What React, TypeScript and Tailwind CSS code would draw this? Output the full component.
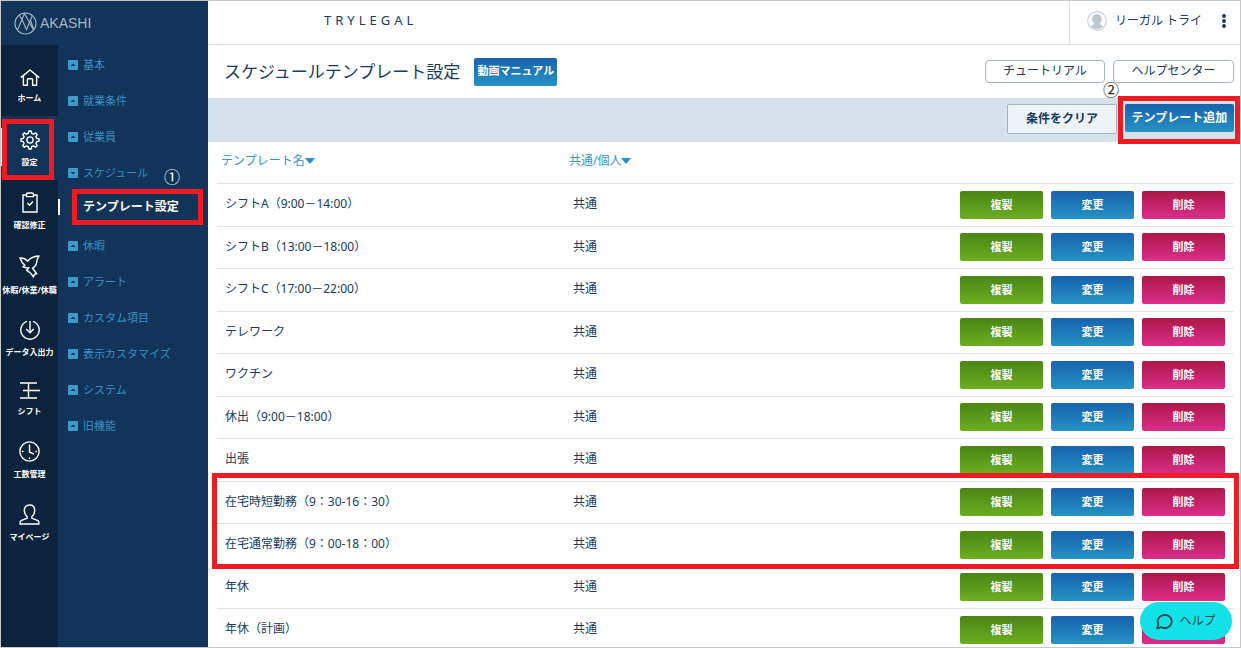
import React from "react";
import clsx from "clsx";

const iconProps = {
    fill: "none",
    stroke: "currentColor",
    strokeWidth: 1.4,
    "aria-hidden": true,
};

const HomeIcon = () => (
    <svg width="20" height="17" viewBox="0 0 20 17" {...iconProps}>
        <path d="M.8 8.6 10 1l9.2 7.6M3.4 7v9.3h4v-5.700q0-.8.8-.8h3.600q.8 0 .8.8v5.700h4V7" strokeLinejoin="round" />
    </svg>
);

const GearIcon = () => (
    <svg width="20" height="20" viewBox="0 0 20 20" {...iconProps} strokeLinejoin="round">
        <circle cx="10" cy="10" r="3.100" />
        <path d="M8.300 3.400 8.900 1h2.200l.6 2.400 1.800.8 2.200-1.300 1.500 1.500-1.300 2.200.8 1.800 2.400.6v2.100l-2.400.6-.8 1.800 1.300 2.200-1.500 1.500-2.200-1.300-1.800.8-.6 2.300H8.900l-.6-2.300-1.800-.8-2.200 1.300-1.500-1.500 1.300-2.200-.8-1.800L.9 11.100V9l2.400-.6.8-1.800-1.300-2.200 1.500-1.500 2.200 1.300z" />
    </svg>
);

const ClipboardIcon = () => (
    <svg width="16" height="21" viewBox="0 0 16 21" {...iconProps}>
        <path d="M4.500 3H1v17h14V3h-3.500M4.500 4.600V2.400Q4.500 1 6 1h4q1.500 0 1.500 1.400v2.200zM5.300 11l2.200 2.200 3.400-3.600" />
    </svg>
);

const BirdIcon = () => (
    <svg width="21" height="23" viewBox="0 0 21 23" {...iconProps} strokeLinejoin="round">
        <path d="M1 3c2.400-.2 5.400.6 7.800 3.200C11 2.600 14 1.500 20 1c-1.600 1.800-2 3.400-2.200 5.600-.3 3-1.800 5.200-4.300 6.600l4.300 5.600-2.200.5-1.300 2.700c-1.400-3-3.600-5.200-6.700-6.700l2.300-2.700c-1.800.5-4.200.3-6-.9L6 10.300C3.600 8.600 2 6.200 1 3z" />
    </svg>
);

const DownloadIcon = () => (
    <svg width="20" height="20" viewBox="0 0 20 20" {...iconProps}>
        <path d="M7 1.300a9.200 9.200 0 1 0 6 0M10 1v11.500M6.200 9 10 12.700 13.800 9" />
    </svg>
);

const ShiftIcon = () => (
    <svg width="20" height="17" viewBox="0 0 20 17" {...iconProps}>
        <path d="M0 1h17M3 8.500h17M0 16h17M8.500 1v15" />
    </svg>
);

const ClockIcon = () => (
    <svg width="21" height="21" viewBox="0 0 21 21" {...iconProps}>
        <circle cx="10.500" cy="10.500" r="9.600" />
        <path d="M10.500 3.500v7.500l4.500 2.200M3 10.500h1.500M16.500 10.500H18M10.500 16.500V18" />
    </svg>
);

const PersonIcon = () => (
    <svg width="21" height="21" viewBox="0 0 21 21" {...iconProps} strokeLinejoin="round">
        <path d="M10.500 1C7.400 1 5.300 3.100 5.300 6.200c0 2.400 1 4.800 2.800 6.300v1.800c-2.300.9-4.900 1.500-6.300 2.500-.6.500-.8 1.600-.8 3.200h19c0-1.600-.2-2.700-.8-3.200-1.400-1-4-1.600-6.300-2.500v-1.800c1.800-1.500 2.800-3.900 2.800-6.300C15.700 3.100 13.600 1 10.500 1z" />
    </svg>
);

const LogoMark = () => (
    <svg width="23" height="23" viewBox="0 0 23 23" fill="none" stroke="currentColor" strokeWidth="1.100" aria-hidden>
        <circle cx="11.500" cy="11.500" r="10.500" />
        <path d="M3.500 18 10.500 1.500 19.500 18M8 7.500l4.500 10L16.500 8l3 9M8 7.500 5.500 3.500M16.500 8l1.500-3.500" />
    </svg>
);

const navItems = [
    { label: "ホーム", Icon: HomeIcon },
    { label: "設定", Icon: GearIcon, active: true },
    { label: "確認修正", Icon: ClipboardIcon },
    { label: "休暇/休業/休職", Icon: BirdIcon },
    { label: "データ入出力", Icon: DownloadIcon },
    { label: "シフト", Icon: ShiftIcon },
    { label: "工数管理", Icon: ClockIcon },
    { label: "マイページ", Icon: PersonIcon },
];

const menuItems = [
    { label: "基本" },
    { label: "就業条件" },
    { label: "従業員" },
    { label: "スケジュール", child: "テンプレート設定" },
    { label: "休暇" },
    { label: "アラート" },
    { label: "カスタム項目" },
    { label: "表示カスタマイズ" },
    { label: "システム" },
    { label: "旧機能" },
];

const templates = [
    "シフトA（9:00－14:00）",
    "シフトB（13:00－18:00）",
    "シフトC（17:00－22:00）",
    "テレワーク",
    "ワクチン",
    "休出（9:00－18:00）",
    "出張",
    "在宅時短勤務（9：30-16：30）",
    "在宅通常勤務（9：00-18：00）",
    "年休",
    "年休（計画）",
];

const BLUE = "bg-linear-to-b from-[#1862ad] to-[#2793c4]";

const IconNav = () => (
    <nav className="w-[57px] shrink-0 bg-[#0c233d] pt-3">
        {navItems.map(({ label, Icon, active }) => (
            <a
                key={label}
                href="#"
                className={clsx(
                    "relative flex flex-col items-center gap-1 pb-[10px] text-white",
                    active ? "bg-[#123458] pt-[14px]" : "pt-3"
                )}
            >
                {active && <span className="absolute left-0 top-3 h-[38px] w-px bg-white" />}
                <Icon />
                <span className="text-[8px] leading-4 font-bold whitespace-nowrap">{label}</span>
                {active && <span className="absolute top-[3px] bottom-0 left-px w-[52px] border-5 border-[#ed1c24]" />}
            </a>
        ))}
    </nav>
);

const SideMenu = () => (
    <ul className="grow pt-[2px]">
        {menuItems.map(({ label, child }) => (
            <li key={label}>
                <a href="#" className="flex h-9 items-center gap-[5px] pl-[10px] text-[11px] text-[#3d8fc6]">
                    <svg width="10" height="10" viewBox="0 0 10 10" aria-hidden>
                        <rect width="10" height="10" rx="1" fill="#3d9bcb" />
                        <path d={child ? "M2.500 4h5L5 6.500z" : "M2.500 6h5L5 3.500z"} fill="#123458" />
                    </svg>
                    {label}
                </a>
                {child && (
                    <div className="relative">
                        <a href="#" className="flex h-[37px] items-start pt-2 pl-[25px] text-xs leading-4 font-bold text-white">
                            <span className="absolute left-0 top-2 h-4 w-[2px] bg-white" />
                            {child}
                        </a>
                        <span className="absolute left-[14px] -top-[2px] h-9 w-[131px] border-5 border-[#ed1c24]" />
                        <span className="absolute left-[106px] -top-6 text-base leading-5 text-white">①</span>
                    </div>
                )}
            </li>
        ))}
    </ul>
);

const Header = () => (
    <header className="flex h-11 shrink-0 items-stretch border-b border-[#dbe3e9]">
        <div className="flex grow items-center pl-[116px] pb-1 text-[13px] tracking-[4px]">TRYLEGAL</div>
        <div className="flex w-[171px] items-center border-l border-[#dbe3e9] pl-[17px] pb-1">
            <svg width="20" height="20" viewBox="0 0 20 20" aria-hidden>
                <circle cx="10" cy="10" r="9.300" fill="#fff" stroke="#c9d2d9" strokeWidth="1.200" />
                <path d="M10 3.200c-3 0-4.800 2-4.800 4.800 0 1.800.8 3.400 2 4.300v1L3.600 15a8.200 8.200 0 0 0 12.800 0l-3.600-1.700v-1c1.200-.9 2-2.500 2-4.300 0-2.800-1.800-4.800-4.800-4.800z" fill="#bcc7cf" />
            </svg>
            <span className="grow pl-2 text-xs">リーガル トライ</span>
            <button aria-label="メニュー" className="px-[14px]">
                <svg width="4" height="14" viewBox="0 0 4 14" fill="#123458" aria-hidden>
                    <circle cx="2" cy="2" r="1.900" />
                    <circle cx="2" cy="7" r="1.900" />
                    <circle cx="2" cy="12" r="1.900" />
                </svg>
            </button>
        </div>
    </header>
);

const SortHead = ({ label }: { label: string }) => (
    <button className="flex items-center text-xs text-[#3c93c2]">
        {label}
        <svg width="10" height="6" viewBox="0 0 10 6" fill="#2590c5" aria-hidden>
            <path d="M0 0h10L5 6z" />
        </svg>
    </button>
);

const RowButton = ({ label, color }: { label: string; color: string }) => (
    <button className={clsx("h-7 w-[83px] rounded-xs text-[11px] leading-4 font-bold text-white", color)}>{label}</button>
);

const TemplateTable = () => (
    <div className="relative pl-[9px] pr-[6px]">
        <table className="w-full table-fixed border-collapse text-xs">
            <thead>
                <tr className="h-[41px] border-b border-[#dfe6eb] text-left">
                    <th className="w-[348px] pl-1 pb-[2px] font-normal"><SortHead label="テンプレート名" /></th>
                    <th className="pl-1 pb-[2px] font-normal"><SortHead label="共通/個人" /></th>
                    <th className="w-[275px]" />
                </tr>
            </thead>
            <tbody>
                {templates.map((name) => (
                    <tr key={name} className="border-b border-[#dfe6eb] odd:h-[43px] even:h-[42px]">
                        <td className="pl-2 pb-px">{name}</td>
                        <td className="pl-2 pb-px">共通</td>
                        <td>
                            <div className="flex justify-end gap-2 pr-[9px]">
                                <RowButton label="複製" color="bg-linear-to-b from-[#4b8516] to-[#6cae20]" />
                                <RowButton label="変更" color={BLUE} />
                                <RowButton label="削除" color="bg-linear-to-b from-[#ab1746] to-[#dd2d8d]" />
                            </div>
                        </td>
                    </tr>
                ))}
            </tbody>
        </table>
        <div className="pointer-events-none absolute left-1 right-px top-[331px] h-24 border-5 border-[#ed1c24]" />
    </div>
);

const App = () => {
    return (
        <div className="relative flex h-screen overflow-hidden border border-[#c8c8c8] bg-white font-['Noto_Sans','Noto_Sans_CJK_JP',sans-serif] text-[#173a5e]">
            <aside className="flex w-[207px] shrink-0 flex-col bg-[#123458]">
                <div className="flex h-11 shrink-0 items-center gap-[3px] pl-[13px] text-[#aab6c3]">
                    <LogoMark />
                    <span className="font-['Liberation_Sans',sans-serif] text-sm">AKASHI</span>
                </div>
                <div className="flex grow">
                    <IconNav />
                    <SideMenu />
                </div>
            </aside>

            <main className="flex grow flex-col">
                <Header />
                <div className="flex h-[53px] shrink-0 items-center pl-4 pr-[6px]">
                    <h1 className="text-[17px]">スケジュールテンプレート設定</h1>
                    <button className={clsx("ml-[14px] h-7 w-[83px] rounded-xs text-[11px] font-bold text-white", BLUE)}>
                        動画マニュアル
                    </button>
                    <div className="ml-auto flex gap-2 text-xs">
                        <button className="h-[23px] w-[120px] rounded border border-[#9fb6c9] pb-[2px] leading-4">チュートリアル</button>
                        <button className="h-[23px] w-[121px] rounded border border-[#9fb6c9] pb-[2px] leading-4">ヘルプセンター</button>
                    </div>
                </div>
                <div className="relative flex h-11 shrink-0 items-start justify-end gap-2 bg-[#d5e2eb] pt-[6px] pr-[6px] text-xs font-bold">
                    <button className="h-[30px] w-[110px] rounded-xs border border-[#9fb6c9] bg-[#edf2f6] pb-px">条件をクリア</button>
                    <button className={clsx("h-7 w-[109px] rounded-xs pb-px text-white", BLUE)}>テンプレート追加</button>
                    <span className="absolute right-0 -top-[2px] h-12 w-[122px] border-5 border-[#ed1c24]" />
                    <span className="absolute right-[121px] -top-[18px] text-base leading-5 font-normal text-[#222]">②</span>
                </div>
                <TemplateTable />
            </main>

            <button className="absolute right-2 bottom-[7px] flex h-[38px] w-[92px] items-center justify-center gap-[6px] rounded-full bg-[#14e1e7] text-xs text-[#17494d]">
                <svg width="17" height="17" viewBox="0 0 17 17" fill="none" stroke="currentColor" strokeWidth="1.800" strokeLinejoin="round" aria-hidden>
                    <path d="M1.200 15.500 2.400 11.300A7 6.500 0 1 1 5.400 14.200z" />
                </svg>
                ヘルプ
            </button>
        </div>
    );
};

export default App;
